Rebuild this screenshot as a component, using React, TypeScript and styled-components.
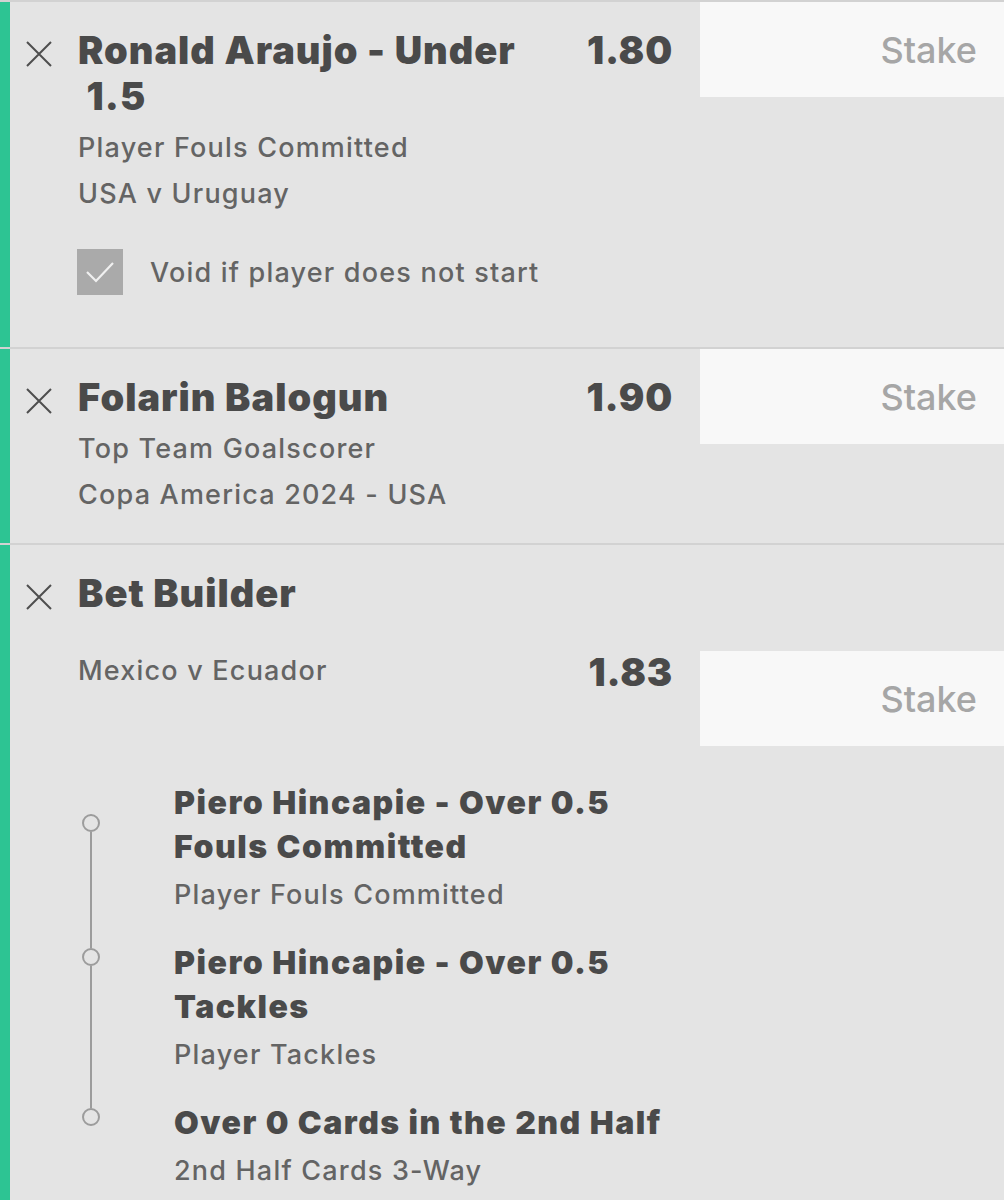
import React from 'react';
import styled, { createGlobalStyle } from 'styled-components';

const GlobalStyle = createGlobalStyle`
  html, body {
    margin: 0;
    padding: 0;
    background: #e4e4e4;
  }
  body {
    font-family: Inter, "Noto Sans", sans-serif;
    -webkit-font-smoothing: antialiased;
  }
`;

const Slip = styled.div`
  width: 1004px;
  height: 1200px;
  overflow: hidden;
  background: #e4e4e4;
  border-top: 2px solid #d2d2d2;
  box-sizing: border-box;
`;

const Card = styled.section`
  display: flex;
  border-bottom: 2px solid #d2d2d2;
`;

const Accent = styled.div`
  width: 10px;
  flex: none;
  background: #2dc493;
`;

const CloseCol = styled.div`
  width: 68px;
  flex: none;
  padding: 39px 0 0 16px;
  box-sizing: border-box;
`;

const Body = styled.div<{ $bottom: number }>`
  flex: 1;
  min-width: 0;
  display: flex;
  flex-direction: column;
  padding-bottom: ${(p) => p.$bottom}px;
`;

const Row = styled.div`
  display: flex;
  align-items: flex-start;
`;

const Main = styled.div`
  flex: 1;
  min-width: 0;
  display: flex;
  flex-direction: column;
`;

const Title = styled.h2`
  margin: 0;
  padding-top: 25px;
  font-size: 38px;
  line-height: 46px;
  font-weight: 900;
  color: #4a4a4a;
  letter-spacing: 1px;
`;

const Odds = styled.div<{ $top?: number }>`
  padding-top: ${(p) => p.$top ?? 25}px;
  margin-right: 27px;
  font-size: 38px;
  line-height: 46px;
  font-weight: 900;
  color: #4a4a4a;
  letter-spacing: 0.8px;
`;

const StakeBox = styled.div<{ $top?: number }>`
  width: 304px;
  height: 95px;
  flex: none;
  margin-top: ${(p) => p.$top ?? 0}px;
  background: #f8f8f8;
  display: flex;
  align-items: center;
  justify-content: flex-end;
  padding-right: 27px;
  box-sizing: border-box;
  font-size: 36px;
  font-weight: 500;
  color: #a6a6a6;
`;

const Sub = styled.div`
  font-size: 27px;
  line-height: 46px;
  font-weight: 500;
  color: #646464;
  letter-spacing: 1.2px;
`;

const SubGroup = styled.div`
  margin-top: 6px;
  display: flex;
  flex-direction: column;
`;

const CheckRow = styled.label`
  display: flex;
  align-items: center;
  gap: 27px;
  margin-top: 32px;
  margin-left: -1px;
  font-size: 27px;
  font-weight: 500;
  color: #646464;
  letter-spacing: 1.2px;
`;

const CheckBox = styled.span`
  width: 46px;
  height: 46px;
  flex: none;
  background: #aaaaaa;
  display: flex;
  align-items: center;
  justify-content: center;
`;

const EventRow = styled(Row)`
  margin-top: 32px;
`;

const Legs = styled.div`
  display: flex;
  flex-direction: column;
  margin-top: 35px;
  padding-right: 331px;
`;

const Leg = styled.div<{ $last?: boolean }>`
  display: flex;
  padding-bottom: ${(p) => (p.$last ? 0 : 24)}px;
`;

const Marker = styled.div`
  width: 96px;
  flex: none;
  padding-left: 4px;
  box-sizing: border-box;
  display: flex;
`;

const Track = styled.div`
  width: 18px;
  display: flex;
  flex-direction: column;
  align-items: center;
`;

const Rail = styled.div<{ $size?: number; $hidden?: boolean }>`
  width: 2px;
  background: ${(p) => (p.$hidden ? 'transparent' : '#9c9c9c')};
  ${(p) => (p.$size !== undefined ? `height: ${p.$size}px;` : 'flex: 1;')}
  margin-bottom: ${(p) => (p.$size !== undefined ? 0 : -24)}px;
`;

const Dot = styled.div`
  width: 18px;
  height: 18px;
  flex: none;
  border: 2px solid #9c9c9c;
  border-radius: 50%;
  box-sizing: border-box;
`;

const LegText = styled.div`
  flex: 1;
  display: flex;
  flex-direction: column;
`;

const LegTitle = styled.div`
  font-size: 32px;
  line-height: 44px;
  font-weight: 900;
  color: #4a4a4a;
  letter-spacing: 1.5px;
`;

const LegSub = styled(Sub)`
  margin-top: 4px;
  line-height: 44px;
`;

const CloseIcon = () => (
  <svg width="26" height="26" viewBox="0 0 26 26">
    <path d="M1 1 L25 25 M25 1 L1 25" stroke="#4e4e4e" strokeWidth="2" fill="none" />
  </svg>
);

const CheckIcon = () => (
  <svg width="32" height="26" viewBox="0 0 32 26">
    <path d="M3 13 L12 22 L29 4" stroke="#f0f0f0" strokeWidth="2.2" fill="none" />
  </svg>
);

const legs = [
  { title: 'Piero Hincapie - Over 0.5 Fouls Committed', sub: 'Player Fouls Committed', dot: 33 },
  { title: 'Piero Hincapie - Over 0.5 Tackles', sub: 'Player Tackles', dot: 7 },
  { title: 'Over 0 Cards in the 2nd Half', sub: '2nd Half Cards 3-Way', dot: 7 },
];

export default function App() {
  return (
    <>
      <GlobalStyle />
      <Slip>
        <Card>
          <Accent />
          <CloseCol>
            <CloseIcon />
          </CloseCol>
          <Body $bottom={52}>
            <Row>
              <Main>
                <Title>
                  Ronald Araujo - Under
                  <br />
                  {'\u00a01.5'}
                </Title>
                <SubGroup>
                  <Sub>Player Fouls Committed</Sub>
                  <Sub>USA v Uruguay</Sub>
                </SubGroup>
                <CheckRow>
                  <CheckBox>
                    <CheckIcon />
                  </CheckBox>
                  Void if player does not start
                </CheckRow>
              </Main>
              <Odds>1.80</Odds>
              <StakeBox>Stake</StakeBox>
            </Row>
          </Body>
        </Card>

        <Card>
          <Accent />
          <CloseCol>
            <CloseIcon />
          </CloseCol>
          <Body $bottom={25}>
            <Row>
              <Main>
                <Title>Folarin Balogun</Title>
                <SubGroup>
                  <Sub>Top Team Goalscorer</Sub>
                  <Sub>Copa America 2024 - USA</Sub>
                </SubGroup>
              </Main>
              <Odds>1.90</Odds>
              <StakeBox>Stake</StakeBox>
            </Row>
          </Body>
        </Card>

        <Card>
          <Accent />
          <CloseCol>
            <CloseIcon />
          </CloseCol>
          <Body $bottom={40}>
            <Title>Bet Builder</Title>
            <EventRow>
              <Main>
                <Sub>Mexico v Ecuador</Sub>
              </Main>
              <Odds $top={1}>1.83</Odds>
              <StakeBox $top={3}>Stake</StakeBox>
            </EventRow>
            <Legs>
              {legs.map((leg, i) => (
                <Leg key={i} $last={i === legs.length - 1}>
                  <Marker>
                    <Track>
                      <Rail $size={leg.dot} $hidden={i === 0} />
                      <Dot />
                      <Rail $hidden={i === legs.length - 1} />
                    </Track>
                  </Marker>
                  <LegText>
                    <LegTitle>{leg.title}</LegTitle>
                    <LegSub>{leg.sub}</LegSub>
                  </LegText>
                </Leg>
              ))}
            </Legs>
          </Body>
        </Card>
      </Slip>
    </>
  );
}
